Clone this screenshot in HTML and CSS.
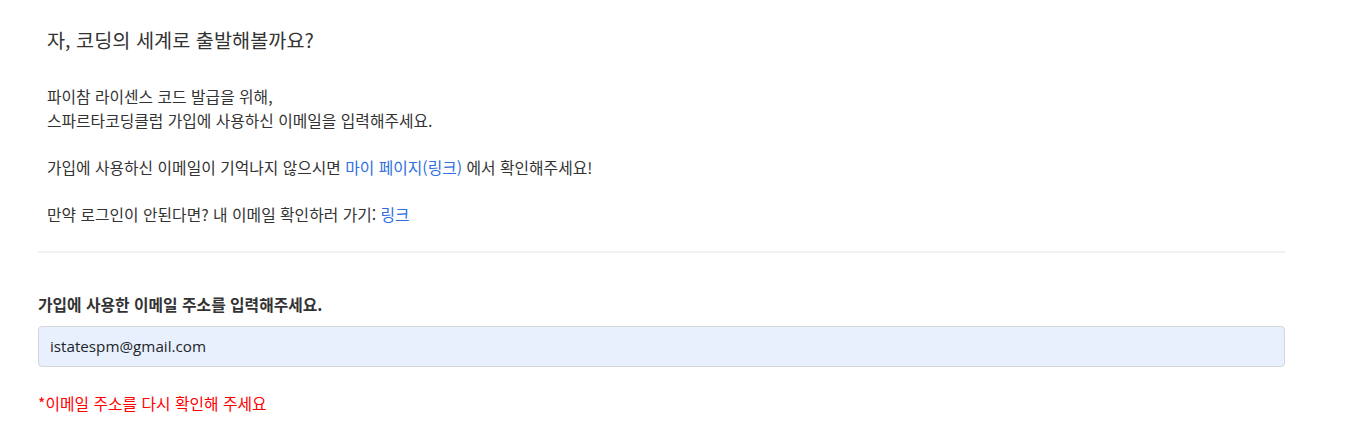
FILE: index.html
```html
<!DOCTYPE html>
<html lang="ko">
<head>
<meta charset="utf-8">
<link rel="stylesheet" href="styles.css">
</head>
<body>
<div class="container">
  <section class="intro">
    <h2 class="title">자, 코딩의 세계로 출발해볼까요?</h2>
    <p class="desc">파이참 라이센스 코드 발급을 위해,<br>스파르타코딩클럽 가입에 사용하신 이메일을 입력해주세요.<br><br>가입에 사용하신 이메일이 기억나지 않으시면 <a class="link" href="#">마이 페이지(링크)</a> 에서 확인해주세요!<br><br>만약 로그인이 안된다면? 내 이메일 확인하러 가기: <a class="link" href="#">링크</a></p>
  </section>
  <hr class="divider">
  <form class="form">
    <label class="label" for="email">가입에 사용한 이메일 주소를 입력해주세요.</label>
    <input class="input" id="email" type="text" value="istatespm@gmail.com">
    <p class="error">*이메일 주소를 다시 확인해 주세요</p>
  </form>
</div>
</body>
</html>
```

FILE: styles.css
```css
* { box-sizing: border-box; }
html, body { margin: 0; padding: 0; background: #fff; }
body {
  font-family: "Noto Sans CJK KR", "Noto Sans", sans-serif;
  color: #333;
}
.container {
  width: 1247px;
  margin-left: 38px;
  padding-top: 26px;
}
.intro { padding-left: 9px; }
.title {
  margin: 0;
  font-size: 19.7px;
  line-height: 28px;
  font-weight: 400;
  color: #333;
}
.desc {
  margin: 31px 0 0;
  font-size: 15.8px;
  line-height: 23.6px;
}
.link { color: #2f6fe0; text-decoration: none; }
.divider {
  margin: 24px 0 0;
  border: 0;
  height: 2px;
  background: #f2f2f2;
}
.form { padding-top: 40px; display: flex; flex-direction: column; }
.label {
  font-size: 15.8px;
  font-weight: 700;
  line-height: 24px;
  color: #333;
}
.input {
  margin-top: 9px;
  height: 41px;
  width: 100%;
  padding: 0 11px;
  border: 1px solid #d3d6da;
  border-radius: 4px;
  background: #e8f0fe;
  font-family: "Open Sans", "Noto Sans", sans-serif;
  font-size: 15.2px;
  color: #212529;
}
.error {
  margin: 25px 0 0;
  font-size: 15.8px;
  line-height: 24px;
  color: #ff0000;
}
```
